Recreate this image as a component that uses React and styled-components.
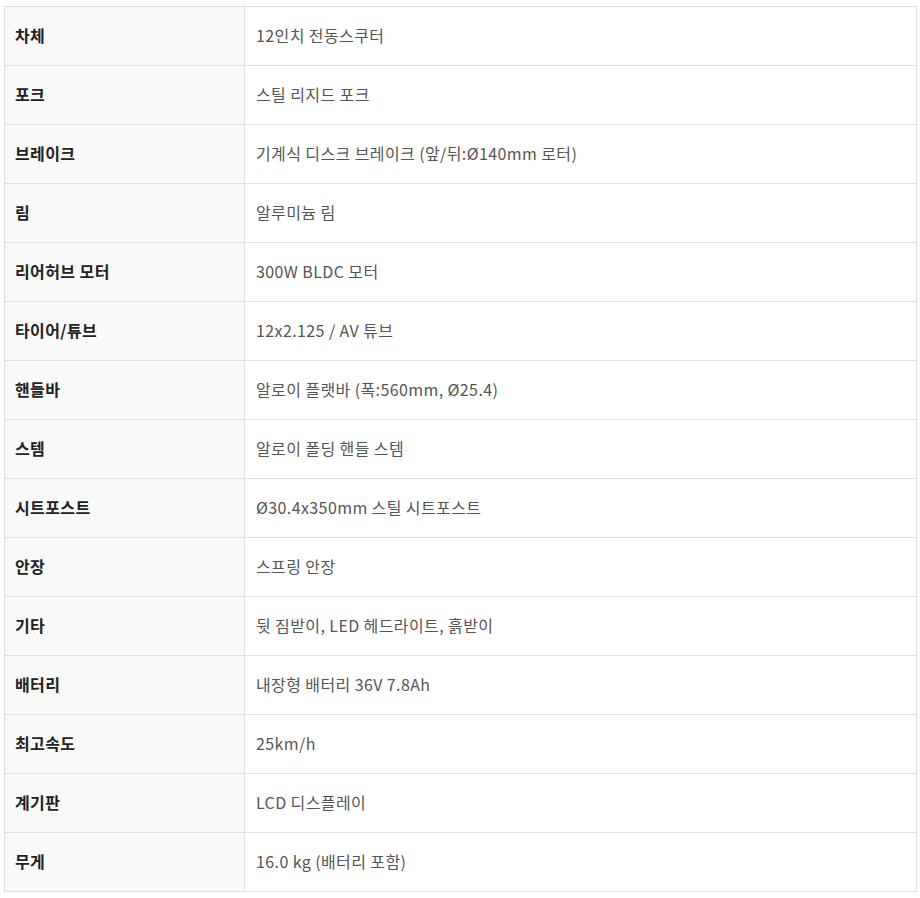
import styled, { createGlobalStyle } from "styled-components";

const GlobalStyle = createGlobalStyle`
  body {
    margin: 0;
    background: #fff;
    font-family: "Noto Sans CJK KR", "Noto Sans", sans-serif;
  }
`;

const Wrapper = styled.div`
  padding: 6px 4px 0 4px;
`;

const SpecTable = styled.table`
  width: 913px;
  border-collapse: collapse;
  border-top: 1px solid #c8c8c8;
  table-layout: fixed;
  font-size: 16px;
  letter-spacing: 0.4px;
`;

const Row = styled.tr`
  height: 59px;
`;

const Label = styled.th`
  box-sizing: border-box;
  width: 240px;
  background: #f9f9f9;
  border: 1px solid #e0e0e0;
  color: #222;
  font-weight: 700;
  text-align: left;
  padding: 0 0 3px 10px;
`;

const Value = styled.td`
  border: 1px solid #e0e0e0;
  color: #555;
  font-weight: 400;
  padding: 0 0 3px 11px;
`;

const specs = [
  ["차체", "12인치 전동스쿠터"],
  ["포크", "스틸 리지드 포크"],
  ["브레이크", "기계식 디스크 브레이크 (앞/뒤:Ø140mm 로터)"],
  ["림", "알루미늄 림"],
  ["리어허브 모터", "300W BLDC 모터"],
  ["타이어/튜브", "12x2.125 / AV 튜브"],
  ["핸들바", "알로이 플랫바 (폭:560mm, Ø25.4)"],
  ["스템", "알로이 폴딩 핸들 스템"],
  ["시트포스트", "Ø30.4x350mm 스틸 시트포스트"],
  ["안장", "스프링 안장"],
  ["기타", "뒷 짐받이, LED 헤드라이트, 흙받이"],
  ["배터리", "내장형 배터리 36V 7.8Ah"],
  ["최고속도", "25km/h"],
  ["계기판", "LCD 디스플레이"],
  ["무게", "16.0 kg (배터리 포함)"],
];

export default function App() {
  return (
    <>
      <GlobalStyle />
      <Wrapper>
        <SpecTable>
          <tbody>
            {specs.map(([k, v]) => (
              <Row key={k}>
                <Label>{k}</Label>
                <Value>{v}</Value>
              </Row>
            ))}
          </tbody>
        </SpecTable>
      </Wrapper>
    </>
  );
}
